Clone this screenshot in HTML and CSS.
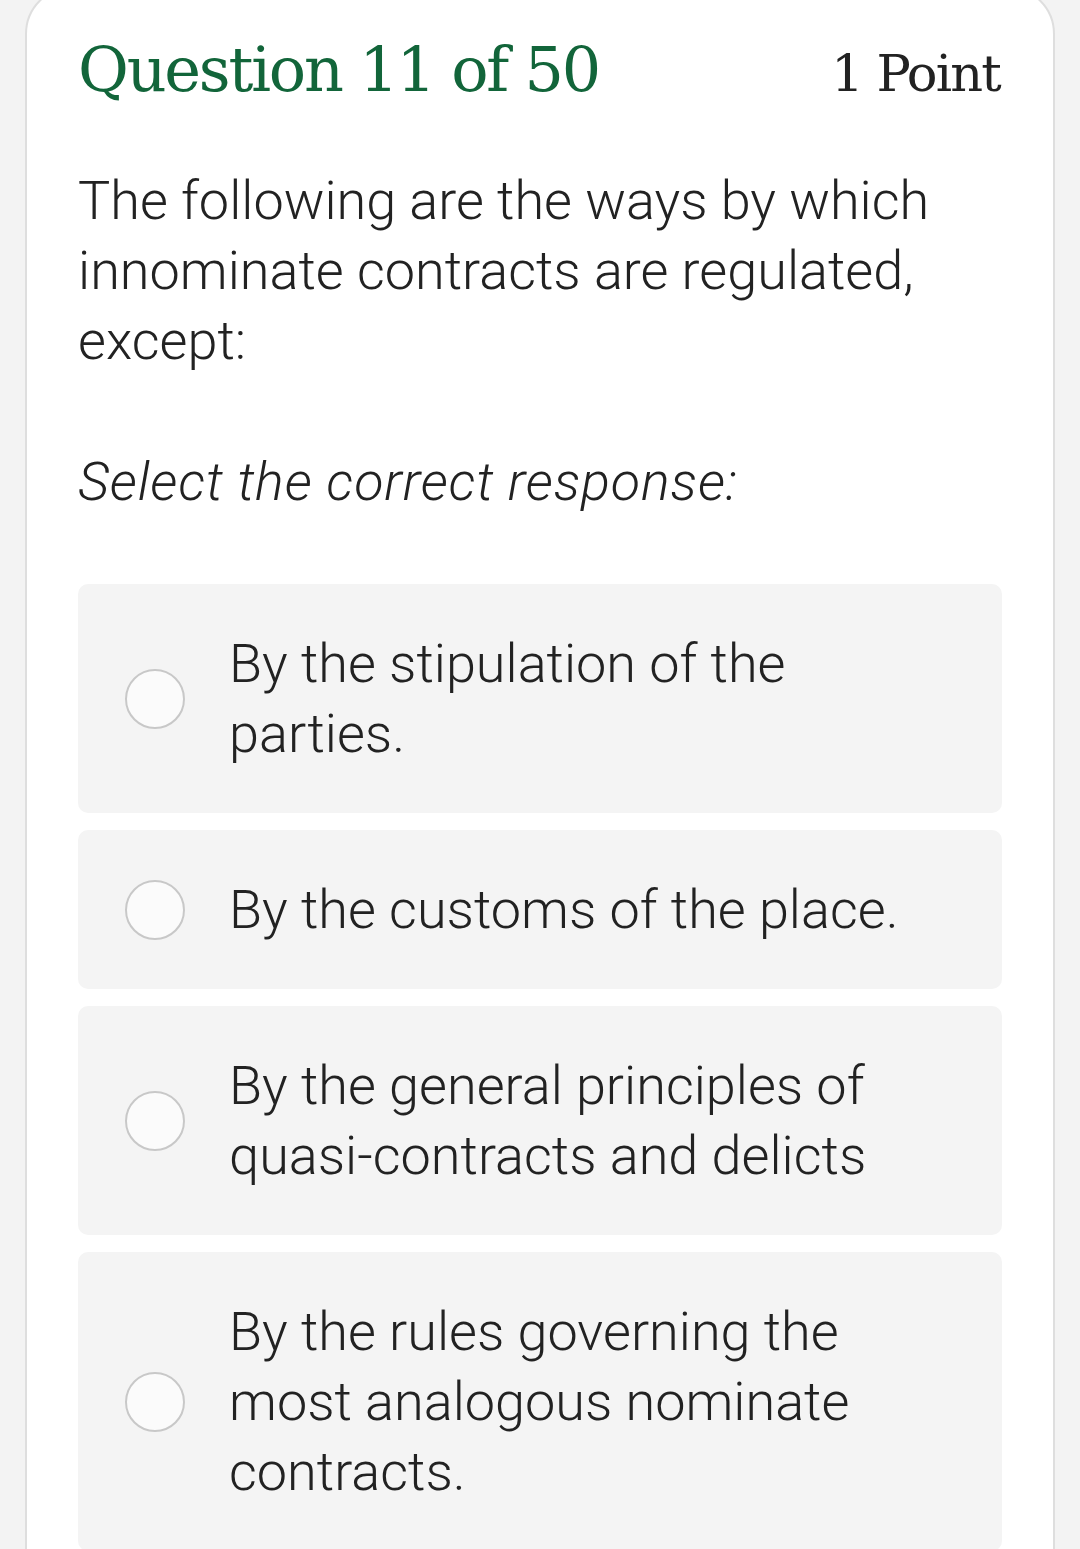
FILE: index.html
```html
<!DOCTYPE html>
<html lang="en">
<head>
<meta charset="utf-8">
<title>Question 11 of 50</title>
<link rel="stylesheet" href="styles.css">
</head>
<body>
<main class="card">
  <header class="q-header">
    <h1 class="q-title">Question 11 of 50</h1>
    <span class="q-points">1 Point</span>
  </header>
  <p class="q-text">The following are the ways by which innominate contracts are regulated, except:</p>
  <p class="q-prompt">Select the correct response:</p>
  <ul class="options">
    <li class="option"><span class="radio"></span><span class="opt-text">By the stipulation of the parties.</span></li>
    <li class="option"><span class="radio"></span><span class="opt-text">By the customs of the place.</span></li>
    <li class="option"><span class="radio"></span><span class="opt-text">By the general principles of quasi-contracts and delicts</span></li>
    <li class="option"><span class="radio"></span><span class="opt-text">By the rules governing the most analogous nominate contracts.</span></li>
  </ul>
</main>
</body>
</html>
```

FILE: styles.css
```css
html, body {
  margin: 0;
  padding: 0;
}
body {
  background: #f3f3f3;
  font-family: "Roboto Light", Roboto, "Noto Sans", sans-serif;
  font-weight: 300;
  color: #222222;
  height: 1549px;
  overflow: hidden;
}
.card {
  display: block;
  margin: -14px 25px 0 25px;
  background: #ffffff;
  border: 2px solid #dedede;
  border-radius: 48px 48px 0 0;
  padding: 0 51px 40px 51px;
  min-height: 1700px;
}
.q-header {
  display: flex;
  justify-content: space-between;
  align-items: baseline;
  padding-top: 42px;
}
.q-title {
  margin: 0;
  font-family: "DejaVu Serif", "Liberation Serif", serif;
  font-weight: 400;
  font-size: 62px;
  letter-spacing: -2.2px;
  line-height: 80px;
  color: #12653a;
}
.q-points {
  font-family: "DejaVu Serif", "Liberation Serif", serif;
  font-weight: 400;
  font-size: 51px;
  letter-spacing: -1.8px;
  margin-right: 2px;
  color: #222222;
}
.q-text {
  margin: 56px 0 0 0;
  font-size: 54px;
  line-height: 70px;
}
.q-prompt {
  margin: 71px 0 0 0;
  font-size: 54px;
  line-height: 70px;
  font-style: italic;
  letter-spacing: 0.8px;
}
.options {
  list-style: none;
  margin: 67px 0 0 0;
  padding: 0;
  display: flex;
  flex-direction: column;
  gap: 17px;
}
.option {
  display: flex;
  align-items: center;
  gap: 44px;
  background: #f4f4f4;
  border-radius: 10px;
  padding: 45px 50px 44px 47px;
}
.radio {
  flex: 0 0 auto;
  width: 56px;
  height: 56px;
  border: 2.5px solid #c8c8c8;
  border-radius: 50%;
  background: #fbfbfb;
}
.opt-text {
  font-size: 54px;
  line-height: 70px;
}
```
